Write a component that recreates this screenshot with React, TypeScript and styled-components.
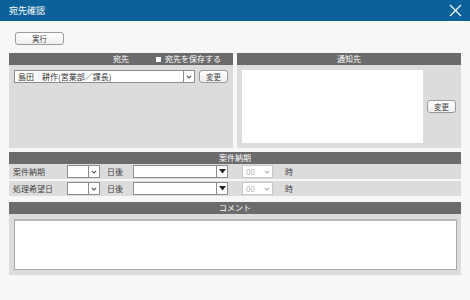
import styled, { createGlobalStyle } from "styled-components"

const GlobalStyle = createGlobalStyle`
  html, body {
    margin: 0;
    padding: 0;
    background: #f7f7f7;
  }
  body {
    font-family: "Noto Sans CJK JP", "Noto Sans", sans-serif;
    color: #333;
  }
`

const Window = styled.div`
  width: 470px;
  height: 300px;
  background: #f7f7f7;
  overflow: hidden;
`

const TitleBar = styled.div`
  height: 21px;
  background: #0b629a;
  color: #fff;
  display: flex;
  align-items: center;
  justify-content: space-between;
  padding: 0 8px 0 9px;
  font-size: 9px;
`

const Content = styled.div`
  padding: 0 9px;
`

const Toolbar = styled.div`
  display: flex;
  padding: 11px 0 8px 6px;
`

const Button = styled.button<{ $w: number }>`
  width: ${(p) => p.$w}px;
  height: 13px;
  padding: 0;
  font-family: inherit;
  font-size: 7.5px;
  line-height: 11px;
  color: #444;
  background: linear-gradient(#ffffff, #eeeeee);
  border: 1px solid #9a9a9a;
  border-radius: 3px;
`

const TopGrid = styled.div`
  display: grid;
  grid-template-columns: 224px 224px;
  gap: 4px;
`

const Header = styled.div`
  height: 12px;
  background: #6b6b6b;
  color: #fff;
  font-size: 8px;
  line-height: 12px;
  display: grid;
  grid-template-columns: 1fr auto 1fr;
  align-items: center;
`

const HeaderTitle = styled.span`
  grid-column: 2;
`

const SaveCheck = styled.label`
  grid-column: 3;
  justify-self: end;
  padding-right: 12px;
  display: flex;
  align-items: center;
  gap: 4px;
`

const CheckBox = styled.span`
  width: 5px;
  height: 5px;
  background: #fff;
`

const PanelBody = styled.div<{ $h: number }>`
  height: ${(p) => p.$h}px;
  background: #dcdcdc;
  padding: 5px;
  box-sizing: border-box;
`

const SelectRow = styled.div`
  display: flex;
  align-items: center;
  gap: 4px;
`

const Select = styled.div<{ $w: number; $disabled?: boolean }>`
  width: ${(p) => p.$w}px;
  height: 13px;
  box-sizing: border-box;
  background: #fff;
  border: 1px solid ${(p) => (p.$disabled ? "#c8c8c8" : "#8d8d8d")};
  display: flex;
  font-size: 8px;
  line-height: 11px;
  color: ${(p) => (p.$disabled ? "#b5b5b5" : "#333")};
`

const SelectValue = styled.span`
  flex: 1;
  padding-left: 3px;
  white-space: nowrap;
  overflow: hidden;
`

const SelectArrow = styled.span<{ $line?: boolean }>`
  width: 10px;
  display: flex;
  align-items: center;
  justify-content: center;
  border-left: ${(p) => (p.$line ? "1px solid #8d8d8d" : "none")};
`

const NotifyBody = styled(PanelBody)`
  display: flex;
  align-items: center;
  gap: 4px;
`

const WhiteBox = styled.div`
  width: 181px;
  height: 73px;
  background: #fff;
`

const Section = styled.div<{ $mt: number }>`
  margin-top: ${(p) => p.$mt}px;
`

const FieldRow = styled.div`
  height: 15px;
  margin-top: 2px;
  background: #dcdcdc;
  display: flex;
  align-items: center;
  font-size: 8px;
  color: #444;
  &:first-of-type {
    margin-top: 0;
  }
`

const Label = styled.span<{ $w: number; $pl?: number }>`
  width: ${(p) => p.$w}px;
  padding-left: ${(p) => p.$pl ?? 0}px;
  flex-shrink: 0;
  white-space: nowrap;
`

const Rows = styled.div`
  display: flex;
  flex-direction: column;
`

const CommentBody = styled.div`
  height: 61px;
  background: #dcdcdc;
  padding: 5px 4px 5px 5px;
  box-sizing: border-box;
`

const TextArea = styled.div`
  height: 51px;
  box-sizing: border-box;
  background: #fff;
  border: 1px solid #a5a5a5;
  border-top-width: 2px;
  border-color: #b8b8b8 #a8a8a8 #a8a8a8 #a8a8a8;
`

const Chevron = ({ color = "#555" }: { color?: string }) => (
  <svg width="6" height="4" viewBox="0 0 6 4">
    <path d="M0.8 0.8 L3 3 L5.2 0.8" fill="none" stroke={color} strokeWidth="1.1" />
  </svg>
)

const Triangle = () => (
  <svg width="7" height="5" viewBox="0 0 7 5">
    <path d="M0 0 H7 L3.5 4.5 Z" fill="#222" />
  </svg>
)

const CloseIcon = () => (
  <svg width="13" height="13" viewBox="0 0 13 13">
    <path d="M1 1 L12 12 M12 1 L1 12" stroke="#fff" strokeWidth="1.1" fill="none" />
  </svg>
)

function DateRow({ label }: { label: string }) {
  return (
    <FieldRow>
      <Label $w={54} $pl={4}>{label}</Label>
      <Select $w={33}>
        <SelectValue />
        <SelectArrow $line>
          <Chevron />
        </SelectArrow>
      </Select>
      <Label $w={26} $pl={7}>日後</Label>
      <Select $w={95}>
        <SelectValue />
        <SelectArrow $line>
          <Triangle />
        </SelectArrow>
      </Select>
      <Label $w={14} />
      <Select $w={31} $disabled>
        <SelectValue>00</SelectValue>
        <SelectArrow>
          <Chevron color="#b0b0b0" />
        </SelectArrow>
      </Select>
      <Label $w={10} $pl={12}>時</Label>
    </FieldRow>
  )
}

export default function App() {
  return (
    <Window>
      <GlobalStyle />
      <TitleBar>
        <span>宛先確認</span>
        <CloseIcon />
      </TitleBar>
      <Content>
        <Toolbar>
          <Button $w={49}>実行</Button>
        </Toolbar>
        <TopGrid>
          <div>
            <Header>
              <HeaderTitle>宛先</HeaderTitle>
              <SaveCheck>
                <CheckBox />
                宛先を保存する
              </SaveCheck>
            </Header>
            <PanelBody $h={83}>
              <SelectRow>
                <Select $w={181}>
                  <SelectValue>島田　耕作(営業部／課長)</SelectValue>
                  <SelectArrow $line>
                    <Chevron />
                  </SelectArrow>
                </Select>
                <Button $w={29}>変更</Button>
              </SelectRow>
            </PanelBody>
          </div>
          <div>
            <Header>
              <HeaderTitle>通知先</HeaderTitle>
            </Header>
            <NotifyBody $h={83}>
              <WhiteBox />
              <Button $w={29}>変更</Button>
            </NotifyBody>
          </div>
        </TopGrid>
        <Section $mt={4}>
          <Header>
            <HeaderTitle>案件納期</HeaderTitle>
          </Header>
          <Rows>
            <DateRow label="案件納期" />
            <DateRow label="処理希望日" />
          </Rows>
        </Section>
        <Section $mt={6}>
          <Header>
            <HeaderTitle>コメント</HeaderTitle>
          </Header>
          <CommentBody>
            <TextArea />
          </CommentBody>
        </Section>
      </Content>
    </Window>
  )
}
